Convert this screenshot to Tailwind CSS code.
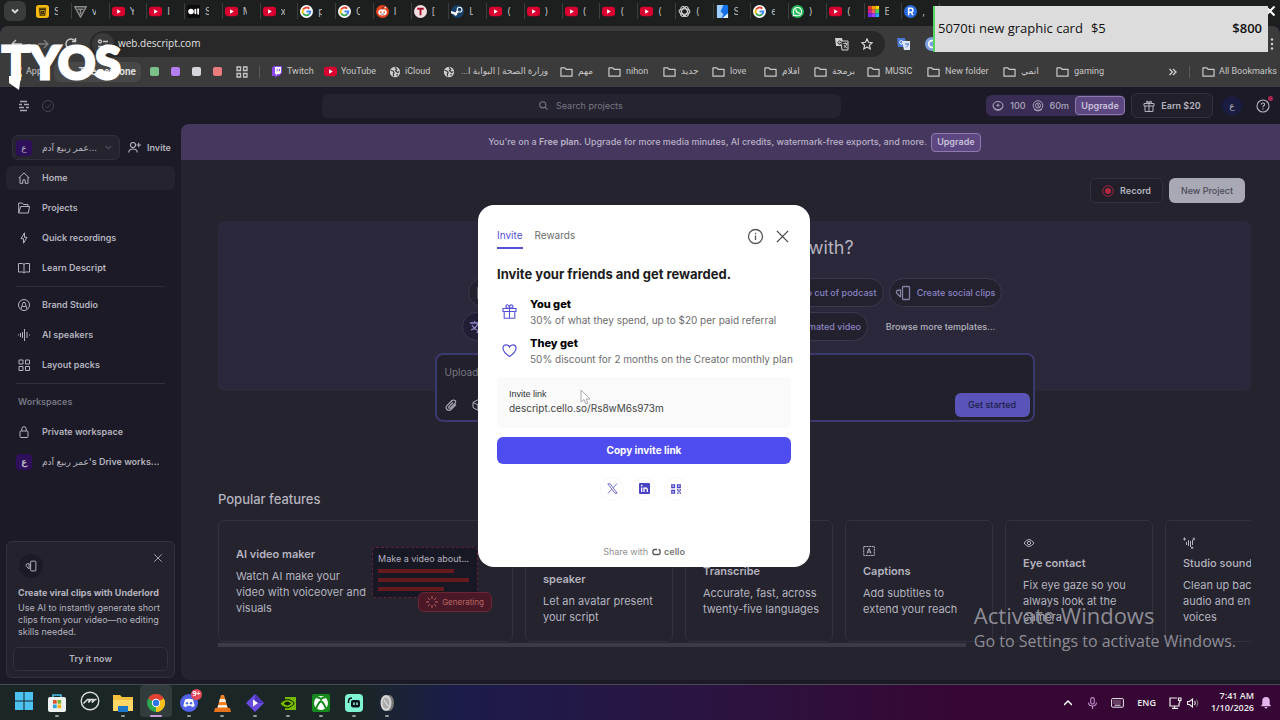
<!doctype html>
<html lang="en">
  <head>
    <meta charset="utf-8">
    <meta name="viewport" content="width=device-width, initial-scale=1">
    <title>Descript</title>
    <script src="https://cdn.jsdelivr.net/npm/@tailwindcss/browser@4"></script>
  </head>
  <body class="relative flex h-screen flex-col overflow-hidden bg-[#1b1a26] font-['Inter','DejaVu_Sans',sans-serif] text-[11px] text-[#b4b3bf]">
    <!-- Shared icons -->
    <svg class="hidden" xmlns="http://www.w3.org/2000/svg">
      <symbol id="yt" viewBox="0 0 14 14"><rect x="0" y="2" width="14" height="10" rx="3" fill="#d9002f"/><path d="M5.5 4.6v4.8L9.5 7z" fill="#fff"/></symbol>
      <symbol id="google" viewBox="0 0 14 14"><circle cx="7" cy="7" r="7" fill="#fff"/><g fill="none" stroke-width="2"><path d="M10 4A4.2 4.2 0 0 0 3.4 4.8" stroke="#ea4335"/><path d="M3.4 4.8a4.2 4.2 0 0 0 0 4.4" stroke="#fbbc05"/><path d="M3.4 9.2A4.2 4.2 0 0 0 9.8 10" stroke="#34a853"/><path d="M9.8 10a4.2 4.2 0 0 0 1.4-3H7" stroke="#4285f4"/></g></symbol>
      <symbol id="reddit" viewBox="0 0 14 14"><circle cx="7" cy="7" r="7" fill="#e64420"/><ellipse cx="7" cy="8" rx="4.6" ry="3.3" fill="#fff"/><circle cx="5.2" cy="7.5" r=".9" fill="#e64420"/><circle cx="8.8" cy="7.5" r=".9" fill="#e64420"/><path d="M5 9.4q2 1.3 4 0M7 4.8l.7-2.6 2 .5" stroke="#222" stroke-width=".7" fill="none"/><circle cx="10" cy="2.8" r="1" fill="#fff"/></symbol>
      <symbol id="bin" viewBox="0 0 14 14"><rect width="14" height="14" rx="3" fill="#f2b90f"/><path d="M3 3.5h8M4 5l.6 6h4.8L10 5zM6 7h2v2H6z" fill="none" stroke="#3a2d06" stroke-width="1.3"/></symbol>
      <symbol id="tri" viewBox="0 0 14 14"><path d="M1 2h12L7 13zM4 4.5h6M7 4.5V10" fill="none" stroke="#8a8a8a" stroke-width="1.6"/></symbol>
      <symbol id="medium" viewBox="0 0 14 14"><rect width="14" height="14" rx="2" fill="#0a0a0a"/><circle cx="4.3" cy="7" r="3" fill="#fff"/><rect x="8" y="4" width="2" height="6" rx="1" fill="#fff"/><rect x="11" y="3.5" width="2" height="7" rx="1" fill="#fff"/></symbol>
      <symbol id="tbadge" viewBox="0 0 14 14"><circle cx="7" cy="7" r="7" fill="#f3dfe2"/><path d="M3.5 4h7M7 4v7" stroke="#a3122c" stroke-width="2"/></symbol>
      <symbol id="steam" viewBox="0 0 14 14"><circle cx="7" cy="7" r="7" fill="#17416c"/><path d="M0 7.5l5 2L8.5 5" stroke="#fff" stroke-width="2.4" fill="none"/><circle cx="9.2" cy="5" r="2.6" fill="#17416c" stroke="#fff" stroke-width="1.1"/><circle cx="5" cy="10" r="1.6" fill="#fff"/></symbol>
      <symbol id="gpt" viewBox="0 0 14 14"><g fill="none" stroke="#ddd" stroke-width="1.1"><ellipse cx="7" cy="7" rx="5.8" ry="3"/><ellipse cx="7" cy="7" rx="5.8" ry="3" transform="rotate(60 7 7)"/><ellipse cx="7" cy="7" rx="5.8" ry="3" transform="rotate(120 7 7)"/></g></symbol>
      <symbol id="bluebook" viewBox="0 0 14 14"><rect x="1" width="12" height="14" rx="1" fill="#1672e8"/><path d="M1 0h7l-3 7 3 3-2 4H1z" fill="#9fd0ff"/><path d="M13 9v5H7z" fill="#e8f3ff"/></symbol>
      <symbol id="whatsapp" viewBox="0 0 14 14"><circle cx="7" cy="7" r="7" fill="#29b85a"/><path d="M2.4 11.7l.7-2.4A4.5 4.5 0 1 1 4.8 11z" fill="none" stroke="#fff" stroke-width="1.1"/><path d="M5.2 4.8q-.3 1.6 1.4 3t3 .9" stroke="#fff" stroke-width="1.4" fill="none"/></symbol>
      <symbol id="rainbow" viewBox="0 0 14 14"><path fill="#e53935" d="M1 1h4v4H1z"/><path fill="#ff9800" d="M5 1h4v4H5z"/><path fill="#ffd400" d="M9 1h4v4H9z"/><path fill="#d81b90" d="M1 5h4v4H1z"/><path fill="#ff5a60" d="M5 5h4v4H5z"/><path fill="#43d05c" d="M9 5h4v4H9z"/><path fill="#7a2cf0" d="M1 9h4v4H1z"/><path fill="#a23cff" d="M5 9h4v4H5z"/><path fill="#26a4ff" d="M9 9h4v4H9z"/></symbol>
      <symbol id="rbadge" viewBox="0 0 14 14"><circle cx="7" cy="7" r="7" fill="#2a6cdf"/><path d="M5 11V3.6h2.6a2 2 0 0 1 0 4.1H5M7.6 7.7L9.6 11" stroke="#fff" stroke-width="1.6" fill="none"/></symbol>
      <symbol id="folder" viewBox="0 0 14 14"><path d="M1 3h4.2l1.4 1.6H13V12H1z" fill="none" stroke="#c8c8c8" stroke-width="1.3" stroke-linejoin="round"/></symbol>
      <symbol id="globe" viewBox="0 0 14 14"><circle cx="7" cy="7" r="6" fill="#cfcfcf"/><path d="M2 5l3 1 1 2-1 1 .5 3M7 1.5L9 4 7.5 5.5 10 7.5l2-1M8.5 10l2 .5" stroke="#3c3c3c" stroke-width="1.4" fill="none"/></symbol>
      <symbol id="clips" viewBox="0 0 16 16"><g fill="none" stroke="currentColor" stroke-width="1.3" stroke-linejoin="round"><rect x="7.5" y="1.5" width="7" height="13" rx="1"/><path d="M5.5 12L2 8.5Q.8 7 2 5.5l3.5-.7V12"/></g></symbol>
      <symbol id="x" viewBox="0 0 12 12"><path d="M1.5 1.5l9 9M10.5 1.5l-9 9" stroke="currentColor" fill="none"/></symbol>
    </svg>

    <!-- Browser tab strip -->
    <div class="flex h-[26px] shrink-0 items-center bg-[#1d1f1e] pb-1 pl-1">
      <button aria-label="Search tabs" class="flex h-5 w-[22px] shrink-0 items-center justify-center rounded-md bg-[#3a3b3b]">
        <svg class="size-3" viewBox="0 0 12 12" fill="none" stroke="#ddd" stroke-width="1.8"><path d="M3 4.5l3 3 3-3"/></svg>
      </button>
      <div id="tabs" class="ml-2 flex w-[906px] shrink-0 items-center"></div>
      <div class="grow"></div>
      <button aria-label="Close window" class="mr-1 text-white"><svg class="size-3" stroke-width="2"><use href="#x"/></svg></button>
    </div>

    <!-- Address bar -->
    <div class="flex h-[34px] shrink-0 items-center rounded-t-lg bg-[#3b3b3b] pt-px text-[#c8c8c8]">
      <button aria-label="Back" class="ml-[10px]"><svg class="size-[14px]" viewBox="0 0 14 14" fill="none" stroke="currentColor" stroke-width="1.3"><path d="M12 7H2M6 3L2 7l4 4"/></svg></button>
      <button aria-label="Forward" class="ml-3 text-[#808080]"><svg class="size-[14px]" viewBox="0 0 14 14" fill="none" stroke="currentColor" stroke-width="1.3"><path d="M2 7h10M8 3l4 4-4 4"/></svg></button>
      <button aria-label="Reload" class="ml-[14px]"><svg class="size-[14px]" viewBox="0 0 14 14" fill="none" stroke="currentColor" stroke-width="1.5"><path d="M11.5 9A5 5 0 1 1 11 4M11.5 1v3.5H8"/></svg></button>
      <div class="ml-3 flex h-[26px] w-[795px] items-center rounded-full bg-[#282828] pl-[2px] pr-3">
        <span class="flex size-[22px] items-center justify-center rounded-full bg-[#3a3a3a]">
          <svg class="size-3" viewBox="0 0 12 12" fill="none" stroke="currentColor" stroke-width="1.3"><circle cx="3" cy="3.5" r="1.5"/><path d="M6 3.5h5M1 8.5h5"/><circle cx="9" cy="8.5" r="1.5"/></svg>
        </span>
        <input aria-label="Address" value="web.descript.com" class="ml-1 min-w-0 grow bg-transparent font-['Open_Sans',sans-serif] text-[10px] text-[#e2e2e2] outline-none">
        <svg class="size-[14px]" viewBox="0 0 14 14"><path d="M0 1h7l2 8H1z" fill="#cfcfcf"/><path d="M5.5 4H13v9H7z" fill="#333" stroke="#cfcfcf"/><path d="M6 4.8A1.6 1.6 0 1 0 6 6.5H4.6" stroke="#333" fill="none"/><path d="M8.5 6.5h4M10.5 5.5v1M12 6.5q-.5 2.5-3 4M9 8q1 2 3 3" stroke="#cfcfcf" fill="none" stroke-width=".9"/></svg>
        <svg class="ml-3 size-3" viewBox="0 0 12 12" fill="none" stroke="#d8d8d8" stroke-width="1.2"><path d="M6 .9l1.5 3.4 3.7.4-2.8 2.5.8 3.7L6 9l-3.2 1.9.8-3.7L.8 4.7l3.7-.4z"/></svg>
      </div>
      <svg class="ml-3 size-[14px]" viewBox="0 0 14 14"><path d="M0 1h8l2 9H1z" fill="#4a78d8"/><path d="M5 4h8v9H7z" fill="#dfe5f2"/><path d="M5.7 4.3a1.7 1.7 0 1 0 .2 1.9H4.6" stroke="#fff" fill="none"/><path d="M8 7h4M10 6v1M11.5 7q-.5 2-2.5 3.5" stroke="#4a78d8" fill="none"/></svg>
      <svg class="ml-[14px] size-[14px]" viewBox="0 0 14 14"><circle cx="7" cy="7" r="7" fill="#7f9fe0"/><path d="M10 5a3.5 3.5 0 1 0 0 4" stroke="#fff" stroke-width="1.5" fill="none"/></svg>
      <div class="grow"></div>
      <button aria-label="Menu" class="mr-[6px]"><svg class="h-3 w-1" viewBox="0 0 4 12" fill="#d0d0d0"><circle cx="2" cy="1.5" r="1.2"/><circle cx="2" cy="6" r="1.2"/><circle cx="2" cy="10.5" r="1.2"/></svg></button>
    </div>

    <!-- Bookmarks bar -->
    <div class="flex h-[27px] shrink-0 items-center overflow-hidden bg-[#3b3b3b] pb-1 font-['Roboto','DejaVu_Sans',sans-serif] text-[9px] whitespace-nowrap text-[#c8c8c8]">
      <a href="#" class="ml-3 flex w-[42px] items-center gap-1"><svg class="size-[10px]" viewBox="0 0 10 10"><path fill="#e8a33d" d="M0 0h3v3H0zM4 4h2v3H4zM7 7h3v3H7z"/><path fill="#d9534f" d="M0 4h3v3H0zM7 0h3v3H7z"/><path fill="#5a9" d="M4 0h2v3H4zM0 8h3v2H0z"/></svg>Apps</a>
      <a href="#" class="flex h-5 w-[87px] items-center justify-end rounded-md bg-[#484848] pr-[5px] text-[10px] font-bold text-[#dedede]">The new one</a>
      <a href="#" aria-label="Green group" class="ml-[9px] size-[9px] rounded-[2px] bg-[#7cc08a]"></a>
      <a href="#" aria-label="Purple group" class="ml-3 size-[9px] rounded-[2px] bg-[#b57ef0]"></a>
      <a href="#" aria-label="Grey group" class="ml-3 size-[9px] rounded-[2px] bg-[#d5d5da]"></a>
      <a href="#" aria-label="Red group" class="ml-3 size-[9px] rounded-[2px] bg-[#ea7b7b]"></a>
      <svg class="ml-[14px] size-3" viewBox="0 0 12 12" fill="none" stroke="#c8c8c8" stroke-width="1.3"><path d="M1 1h3.5v3.5H1zM7.5 1H11v3.5H7.5zM1 7.5h3.5V11H1zM7.5 7.5H11V11H7.5z"/></svg>
      <span class="ml-[11px] h-3 w-px bg-[#5a5a5a]"></span>
      <a href="#" class="ml-[11px] flex w-[53px] items-center gap-1"><svg class="size-3 shrink-0" viewBox="0 0 12 12"><path d="M1 2l2-2h8v7l-3 3H6l-2 2v-2H1z" fill="#8b46f0"/><path d="M4 1h6v5.5L8.5 8h-2L5 9.5V8H4z" fill="#fff"/><path d="M6.2 2.8v2.4M8.4 2.8v2.4" stroke="#8b46f0"/></svg>Twitch</a>
      <a href="#" class="flex w-[65px] items-center gap-1"><svg class="size-[13px] shrink-0"><use href="#yt"/></svg>YouTube</a>
      <a href="#" class="flex w-[54px] items-center gap-1"><svg class="size-3 shrink-0"><use href="#globe"/></svg>iCloud</a>
      <a href="#" class="flex w-[117px] items-center gap-[6px]"><svg class="size-3 shrink-0"><use href="#globe"/></svg><span dir="rtl">وزارة الصحة | البوابة ا...</span></a>
      <a href="#" class="flex w-[48px] items-center gap-[5px]"><svg class="size-[13px] shrink-0"><use href="#folder"/></svg>مهم</a>
      <a href="#" class="flex w-[55px] items-center gap-[5px]"><svg class="size-[13px] shrink-0"><use href="#folder"/></svg>nihon</a>
      <a href="#" class="flex w-[49px] items-center gap-[5px]"><svg class="size-[13px] shrink-0"><use href="#folder"/></svg>جديد</a>
      <a href="#" class="flex w-[52px] items-center gap-[5px]"><svg class="size-[13px] shrink-0"><use href="#folder"/></svg>love</a>
      <a href="#" class="flex w-[50px] items-center gap-[5px]"><svg class="size-[13px] shrink-0"><use href="#folder"/></svg>افلام</a>
      <a href="#" class="flex w-[53px] items-center gap-[5px]"><svg class="size-[13px] shrink-0"><use href="#folder"/></svg>برمجة</a>
      <a href="#" class="flex w-[60px] items-center gap-[5px]"><svg class="size-[13px] shrink-0"><use href="#folder"/></svg>MUSIC</a>
      <a href="#" class="flex w-[76px] items-center gap-[5px]"><svg class="size-[13px] shrink-0"><use href="#folder"/></svg>New folder</a>
      <a href="#" class="flex w-[53px] items-center gap-[5px]"><svg class="size-[13px] shrink-0"><use href="#folder"/></svg>انمي</a>
      <a href="#" class="flex items-center gap-[5px]"><svg class="size-[13px] shrink-0"><use href="#folder"/></svg>gaming</a>
      <div class="grow"></div>
      <button aria-label="More bookmarks"><svg class="size-2" viewBox="0 0 8 8" fill="none" stroke="#d0d0d0" stroke-width="1.3"><path d="M.5 1l3 3-3 3M4 1l3 3-3 3"/></svg></button>
      <span class="ml-3 h-3 w-px bg-[#5a5a5a]"></span>
      <a href="#" class="ml-3 mr-[3px] flex items-center gap-1"><svg class="size-[13px] shrink-0"><use href="#folder"/></svg>All Bookmarks</a>
    </div>

    <!-- Descript app -->
    <div class="relative flex min-h-0 grow flex-col pb-1">
      <header class="flex h-[37px] shrink-0 items-center">
        <svg class="ml-[18px] size-3" viewBox="0 0 12 12" stroke="#a9a8b4" stroke-width="1.6" fill="none"><path d="M2 1.5h7M1 4.5h3M6 4.5h5M1 7.5h5M8 7.5h3M2 10.5h7"/></svg>
        <svg class="ml-3 size-3" viewBox="0 0 12 12" stroke="#474652" fill="none"><circle cx="6" cy="6" r="5.5"/><path d="M3.5 6.2l1.8 1.7 3.2-3.6"/></svg>
        <label class="ml-[268px] flex h-6 w-[519px] items-center justify-center gap-2 rounded-md bg-[#24232f] text-[#777683]">
          <svg class="size-[9px]" viewBox="0 0 10 10" fill="none" stroke="currentColor" stroke-width="1.2"><circle cx="4.2" cy="4.2" r="3.4"/><path d="M6.8 6.8l2.7 2.7"/></svg>
          <input aria-label="Search projects" placeholder="Search projects" class="w-[68px] bg-transparent text-[9px] outline-none placeholder:text-[#777683]">
        </label>
        <div class="flex grow items-center justify-end pr-[10px] text-[9px]">
          <div class="flex h-[21px] items-center gap-[6px] rounded-md bg-[#3a2d55] pl-[6px] font-medium text-[#aaa6bb]">
            <svg class="size-3" viewBox="0 0 12 12" fill="none" stroke="currentColor"><ellipse cx="6" cy="5.5" rx="5" ry="4"/><path d="M1 6.5q1 4 5 4t5-4M6 3.8v3M4.5 5.3h3"/></svg>100
            <svg class="size-3" viewBox="0 0 12 12" fill="none" stroke="currentColor"><circle cx="6" cy="5.5" r="4.8"/><circle cx="6" cy="5.5" r="2.5"/><path d="M6 4v2l1.5.5M2 9.5q4 3 8 0"/></svg>60m
            <button class="h-[19px] w-[50px] rounded-sm border border-[#8d79ad] bg-[#5c4780] font-semibold text-[#c9c0da]">Upgrade</button>
          </div>
          <button class="ml-[6px] flex h-[25px] w-[82px] items-center justify-center gap-[6px] rounded-md border border-[#32313d] bg-[#201f2a] font-semibold">
            <svg class="size-3" viewBox="0 0 12 12" fill="none" stroke="currentColor"><path d="M1 3.5h10v2.5H1zM2 6v5.5h8V6M6 3.5v8M6 3.5Q3 3.5 3.5 1.5 5.5 0 6 3.5q.5-3.5 2.5-2Q9 3.5 6 3.5"/></svg>Earn $20</button>
          <span class="ml-[9px] flex size-5 items-center justify-center rounded-full bg-[#1b1c42]">ع</span>
          <button aria-label="Help" class="relative ml-[14px] flex size-[14px] items-center justify-center">
            <svg class="size-[14px]" viewBox="0 0 14 14" fill="none" stroke="#b4b3bf" stroke-width="1.1"><circle cx="7" cy="7" r="6"/><path d="M5.3 5.6Q5.3 4 7 4t1.7 1.5Q8.7 6.5 7 7.2v1M7 9.3v1.1"/></svg>
            <span class="absolute -top-[3px] -right-[3px] size-[5px] rounded-full bg-[#a8264f]"></span>
          </button>
        </div>
      </header>

      <div class="flex min-h-0 grow">
        <!-- Sidebar -->
        <aside class="flex w-[181px] shrink-0 flex-col px-[6px] pt-[11px] text-[9px] font-semibold">
          <div class="flex h-[25px] items-center gap-2 pl-[6px]">
            <button class="flex h-[25px] w-[108px] shrink-0 items-center rounded-md border border-[#302f3b] bg-[#24232e] pl-[3px] pr-[7px] font-medium">
              <span class="flex size-4 items-center justify-center rounded-sm bg-[#2d0f5a]">ع</span>
              <span class="ml-[10px] grow text-left whitespace-nowrap">عمر ربيع آدم...</span>
              <svg class="ml-1 size-[7px]" viewBox="0 0 8 8" fill="none" stroke="#777683"><path d="M1 2.5l3 3 3-3"/></svg>
            </button>
            <button class="flex items-center gap-[6px]"><svg class="size-[13px]" viewBox="0 0 13 13" fill="none" stroke="currentColor" stroke-width="1.1"><circle cx="5" cy="4" r="2.5"/><path d="M.7 11.5Q1 8 5 8t4.3 3.5M8.5 4h4.5M10.7 1.7v4.6"/></svg>Invite</button>
          </div>
          <nav class="mt-[6px] flex flex-col gap-[6px]">
            <a href="#" class="flex h-6 items-center gap-3 rounded-md bg-[#24232e] pl-3"><svg class="size-3" viewBox="0 0 12 12" fill="none" stroke="currentColor"><path d="M.7 6L6 .9 11.3 6M2 5v6.3h2.8V8q1.2-1 2.4 0v3.3H10V5"/></svg>Home</a>
            <a href="#" class="flex h-6 items-center gap-3 pl-3"><svg class="size-3" viewBox="0 0 12 12" fill="none" stroke="currentColor"><path d="M.7 11V1h3.6l1.2 1.5H10V4.5M.7 11l2-6.5h8.8L10.3 11z"/></svg>Projects</a>
            <a href="#" class="flex h-6 items-center gap-3 pl-3"><svg class="size-3" viewBox="0 0 12 12" fill="none" stroke="currentColor" stroke-linejoin="round"><path d="M6.5.8L3 6.7h2.5v4.5L9 5.3H6.5z"/></svg>Quick recordings</a>
            <a href="#" class="flex h-6 items-center gap-3 pl-3"><svg class="size-3" viewBox="0 0 12 12" fill="none" stroke="currentColor"><path d="M.5 1.5h4Q6 1.5 6 3q0-1.5 1.5-1.5h4v8.5h-4L6 11l-1.5-1h-4zM6 3v8"/></svg>Learn Descript</a>
            <hr class="mx-[10px] border-[#2d2c38]">
            <a href="#" class="flex h-6 items-center gap-3 pl-3"><svg class="size-3" viewBox="0 0 12 12" fill="none" stroke="currentColor"><circle cx="6" cy="6" r="5.5"/><path d="M3 10l2-6.5h2L9 10M4.2 7.5h3.6"/></svg>Brand Studio</a>
            <a href="#" class="flex h-6 items-center gap-3 pl-3"><svg class="size-3" viewBox="0 0 12 12" fill="none" stroke="currentColor"><path d="M.5 5.5v1M2.5 4v4M4.5 3v6M6.5 0v12M9 3v6M11.5 5.5v1"/></svg>AI speakers</a>
            <a href="#" class="flex h-6 items-center gap-3 pl-3"><svg class="size-3" viewBox="0 0 12 12" fill="none" stroke="currentColor"><path d="M1 1h4v4H1zM7.5 1h4v4h-4zM1 7.5h4v4H1zM7.5 7.5h4v4h-4z"/></svg>Layout packs</a>
            <hr class="mx-[10px] border-[#32313d]">
            <h2 class="flex h-6 items-center pl-3 text-[#777683]">Workspaces</h2>
            <a href="#" class="flex h-6 items-center gap-3 pl-3"><svg class="size-3" viewBox="0 0 12 12" fill="none" stroke="currentColor"><rect x="2" y="5" width="8" height="6.5" rx="1"/><path d="M3.8 5V3Q4 .7 6 .7T8.2 3v2"/></svg>Private workspace</a>
            <a href="#" class="flex h-6 items-center gap-[10px] pl-[10px] whitespace-nowrap"><span class="flex size-4 shrink-0 items-center justify-center rounded-sm bg-[#2d0f5a]">ع</span><span><bdi class="font-medium">عمر ربيع آدم</bdi>'s Drive works...</span></a>
          </nav>

          <section class="mt-auto mb-[2px] rounded-md border border-[#32313d] bg-[#23222d] p-[6px]">
            <div class="flex items-start justify-between pt-[5px] pl-[6px] pr-[5px]">
              <span class="mt-px flex size-6 items-center justify-center rounded-full bg-[#1b1a26]"><svg class="size-3"><use href="#clips"/></svg></span>
              <button aria-label="Dismiss"><svg class="size-[10px]"><use href="#x"/></svg></button>
            </div>
            <h3 class="mt-2 pl-[5px] leading-[14px] font-bold whitespace-nowrap">Create viral clips with Underlord</h3>
            <p class="mt-[2px] pl-[5px] leading-[12px] font-normal whitespace-nowrap">Use AI to instantly generate short<br>clips from your video—no editing<br>skills needed.</p>
            <button class="mt-[9px] h-6 w-full rounded-md border border-[#32313d] bg-[#201f2a]">Try it now</button>
          </section>
        </aside>

        <!-- Main panel -->
        <main class="flex min-w-0 grow flex-col overflow-hidden rounded-l-lg bg-[#24232e]">
          <div class="flex h-9 shrink-0 items-center justify-center gap-1 bg-[#46375f] pl-2 text-[9px] font-medium text-[#b9b2c7]">
            <p>You're on a <b class="font-semibold">Free plan.</b> Upgrade for more media minutes, AI credits, watermark-free exports, and more.</p>
            <button class="h-[19px] w-[50px] rounded-sm border border-[#8d79ad] bg-[#5c4780] font-semibold text-[#c9c0da]">Upgrade</button>
          </div>
          <div class="mt-[18px] flex shrink-0 justify-end gap-[6px] pr-[35px] text-[9px]">
            <button class="flex h-[25px] w-[73px] items-center justify-center gap-[6px] rounded-md border border-[#32313d] bg-[#201f2a] font-semibold"><svg class="size-3" viewBox="0 0 12 12"><circle cx="6" cy="6" r="5.3" fill="none" stroke="#a3273f"/><circle cx="6" cy="6" r="3" fill="#b3273f"/></svg>Record</button>
            <button class="h-[25px] w-[76px] rounded-md bg-[#a9a8b5] font-medium text-[#4b4a57]">New Project</button>
          </div>

          <section class="mt-[18px] mr-[29px] ml-[37px] flex h-[170px] shrink-0 flex-col items-center rounded-md bg-[#2a283a] pt-[14px]">
            <h1 class="text-[18px] leading-[26px] font-normal">What can we help you with?</h1>
            <div class="mt-[17px] flex w-[534px] justify-between text-[9px] font-medium text-[#8b84c4]">
              <button class="flex h-[29px] items-center gap-[7px] rounded-full border border-[#3b3950] bg-[#22212d] px-[6px]"><svg class="size-4" viewBox="0 0 16 16" fill="none" stroke="#9f9eac"><path d="M3 2h10v12H3zM5 5h6M5 8h6M5 11h4"/></svg>Edit a script</button>
              <div class="flex gap-[5px]">
                <button class="flex h-[29px] items-center rounded-full border border-[#3b3950] bg-[#22212d] px-[6px]">Video cut of podcast</button>
                <button class="flex h-[29px] w-[113px] items-center justify-center gap-[6px] rounded-full border border-[#3b3950] bg-[#22212d]"><svg class="size-4 text-[#8581a5]"><use href="#clips"/></svg>Create social clips</button>
              </div>
            </div>
            <div class="mt-[5px] flex w-[545px] justify-between text-[9px] font-medium text-[#8b84c4]">
              <button class="flex h-[29px] items-center gap-[7px] rounded-full border border-[#3b3950] bg-[#201d35] px-[6px]"><svg class="size-4" viewBox="0 0 16 16" fill="none" stroke="currentColor" stroke-width="1.3"><path d="M1 4h9M5.5 2v2M9 4q-1.5 5-7 7M3 6q2 4 5 5M8 14l3.5-8 3.5 8M9.5 11.5h4"/></svg>Translate</button>
              <div class="flex gap-[6px]">
                <button class="flex h-[29px] items-center rounded-full border border-[#3b3950] bg-[#22212d] px-[6px]">Make an animated video</button>
                <button class="w-[133px] text-[#b4b3bf]">Browse more templates...</button>
              </div>
            </div>
            <div class="mt-3 flex h-[69px] w-[600px] shrink-0 flex-col justify-between rounded-lg border-2 border-[#3c3870] bg-[#22212b] py-[3px] pr-[3px] pl-2">
              <input aria-label="Prompt" placeholder="Upload a file or describe your video" class="mt-[6px] bg-transparent text-[10px] leading-4 outline-none placeholder:text-[#777683]">
              <div class="flex items-center">
                <svg class="size-3" viewBox="0 0 12 12" fill="none" stroke="currentColor" stroke-width="1.1"><path d="M11 5.5L6 10.5q-2 1.5-4 0t0-4L7 1.5q1.5-1 3 0t0 3L5.5 9Q4.5 9.5 4 9t0-1.5L8 3.5"/></svg>
                <svg class="ml-[15px] size-3" viewBox="0 0 12 12" fill="none" stroke="currentColor"><path d="M6 .7l5 2.7v5.2L6 11.3 1 8.6V3.4zM1 3.4l5 2.6 5-2.6M6 6v5.3"/></svg>
                <button class="ml-auto h-6 w-[75px] rounded-md bg-[#5a54b8] text-[9px] font-medium text-[#201d4a]">Get started</button>
              </div>
            </div>
          </section>

          <h2 class="mt-[98px] ml-[37px] shrink-0 text-[13px] leading-5 font-medium">Popular features</h2>
          <div class="mt-[11px] mr-[29px] ml-[37px] flex h-[122px] shrink-0 gap-3 overflow-hidden text-[11px] leading-4">
            <article class="relative flex w-[295px] shrink-0 items-center rounded-md border border-[#32313d] pl-[17px]">
              <div class="w-[136px] shrink-0">
                <h3 class="font-semibold">AI video maker</h3>
                <p class="mt-[6px] w-[134px]">Watch AI make your<br>video with voiceover and<br>visuals</p>
              </div>
              <div class="relative mt-[26px] h-[51px] w-[106px] self-start rounded-sm border border-dashed border-[#5e2334] bg-[#181724] p-[5px]">
                <p class="text-[9px] leading-3 whitespace-nowrap">Make a video about...</p>
                <div class="mt-1 h-1 w-[76px] bg-[#651a1d]"></div>
                <div class="mt-[5px] h-1 w-[91px] bg-[#651a1d]"></div>
                <div class="mt-[5px] h-1 w-[66px] bg-[#651a1d]"></div>
                <span class="absolute top-[44px] left-[45px] flex h-5 w-[74px] items-center justify-center gap-1 rounded-md border border-[#692735] bg-[#4a1826] text-[8px] text-[#b86763]"><svg class="size-3" viewBox="0 0 12 12" stroke="currentColor"><path d="M6 0v3M6 9v3M0 6h3M9 6h3M1.8 1.8l2 2M8.2 8.2l2 2M10.2 1.8l-2 2M3.8 8.2l-2 2"/></svg>Generating</span>
              </div>
            </article>
            <article class="flex w-[148px] shrink-0 flex-col justify-center rounded-md border border-[#32313d] px-[17px]">
              <svg class="mb-[6px] size-3" viewBox="0 0 12 12" fill="none" stroke="currentColor"><circle cx="6" cy="4" r="2.5"/><path d="M1 11q1-4 5-4t5 4"/></svg>
              <h3 class="font-semibold">Generate an AI<br>speaker</h3>
              <p class="mt-[6px]">Let an avatar present your script</p>
            </article>
            <article class="flex w-[148px] shrink-0 flex-col justify-center rounded-md border border-[#32313d] pl-[17px]">
              <svg class="mb-[6px] size-3" viewBox="0 0 12 12" fill="none" stroke="currentColor"><path d="M1 2h10M1 5h7M1 8h10"/></svg>
              <h3 class="font-semibold">Transcribe</h3>
              <p class="mt-[6px]">Accurate, fast, across twenty-five languages</p>
            </article>
            <article class="flex w-[148px] shrink-0 flex-col justify-center rounded-md border border-[#32313d] px-[17px]">
              <svg class="mb-[6px] size-3" viewBox="0 0 12 12" fill="none" stroke="currentColor"><rect x=".7" y="1.5" width="10.6" height="9" stroke-dasharray="2 .6"/><path d="M4 8.5L6 3.5l2 5M4.7 7h2.6"/></svg>
              <h3 class="font-semibold">Captions</h3>
              <p class="mt-[6px]">Add subtitles to extend your reach</p>
            </article>
            <article class="flex w-[148px] shrink-0 flex-col justify-center rounded-md border border-[#32313d] px-[17px]">
              <svg class="mb-[6px] size-3" viewBox="0 0 12 12" fill="none" stroke="currentColor"><path d="M1 6q5-7 10 0-5 7-10 0z"/><circle cx="6" cy="6" r="1.7"/></svg>
              <h3 class="font-semibold">Eye contact</h3>
              <p class="mt-[6px]">Fix eye gaze so you always look at the camera</p>
            </article>
            <article class="flex w-[148px] shrink-0 flex-col justify-center rounded-md border border-[#32313d] pl-[17px]">
              <svg class="mb-[6px] size-3" viewBox="0 0 12 12" fill="none" stroke="currentColor"><path d="M0 2h3M1.5.5v3M3.5 5v3M5.5 3v6M7.5 4v6M9.5 3v5M11 .5v3M9.5 2h3M9 9.5v2.5M8 10.8h2.5"/></svg>
              <h3 class="font-medium whitespace-nowrap">Studio sound</h3>
              <p class="mt-[6px] whitespace-nowrap">Clean up background<br>audio and enhance<br>voices</p>
            </article>
          </div>
          <div class="mt-px mr-[29px] ml-[37px] shrink-0"><div class="h-[4px] w-[748px] bg-[#3b3a47]"></div></div>
        </main>
      </div>

      <!-- Invite dialog -->
      <div class="absolute inset-0 flex items-center justify-center pl-2">
        <div role="dialog" aria-label="Invite your friends" class="flex h-[362px] w-[332px] flex-col rounded-2xl bg-white px-[19px] pt-[22px] text-[10px] text-[#2a2a2a]">
          <div class="flex items-start text-[#6b6b6b]">
            <button class="h-[22px] border-b-2 border-[#5450d8] pb-[2px] text-[#5450d8]">Invite</button>
            <button class="ml-3 h-[22px] pb-1">Rewards</button>
            <button aria-label="Info" class="mt-px ml-auto"><svg class="size-[17px]" viewBox="0 0 17 17" fill="none" stroke="#555" stroke-width="1.3"><circle cx="8.5" cy="8.5" r="7"/><path d="M8.5 7.5v4.5M8.5 4.8v1.4"/></svg></button>
            <button aria-label="Close" class="mt-[2px] mr-px ml-[11px] text-[#444]"><svg class="size-[15px]"><use href="#x"/></svg></button>
          </div>
          <h2 class="mt-4 text-[13px] leading-[18px] font-bold text-[#1c1c1c]">Invite your friends and get rewarded.</h2>
          <div class="mt-[13px] flex items-center gap-[13px] pl-[5px]">
            <svg class="size-[15px] shrink-0" viewBox="0 0 15 15" fill="none" stroke="#5450d8" stroke-width="1.1"><path d="M1 4.5h13v3H1zM2.2 7.5v6.7h10.6V7.5M7.5 4.5v9.7M7.5 4.5Q4 4.5 4 2.5T5.5.8Q7.5 1 7.5 4.5 7.5 1 9.5.8 11 1 11 2.5T7.5 4.5"/></svg>
            <div><h3 class="text-[11px] leading-4 font-extrabold text-black">You get</h3><p class="leading-4 whitespace-nowrap text-[#6d6d6d]">30% of what they spend, up to $20 per paid referral</p></div>
          </div>
          <div class="mt-[7px] flex items-center gap-[13px] pl-[5px]">
            <svg class="size-[15px] shrink-0" viewBox="0 0 15 15" fill="none" stroke="#5450d8" stroke-width="1.2"><path d="M7.5 13.5Q1 9 1 5.2 1 1.8 4.2 1.8 6.5 1.8 7.5 4 8.5 1.8 10.8 1.8 14 1.8 14 5.2 14 9 7.5 13.5z"/></svg>
            <div><h3 class="text-[11px] leading-4 font-extrabold text-black">They get</h3><p class="leading-4 whitespace-nowrap text-[#6d6d6d]">50% discount for 2 months on the Creator monthly plan</p></div>
          </div>
          <label class="mt-[10px] flex h-[51px] flex-col rounded-md bg-[#fafafa] px-3 pt-[10px] font-['Liberation_Sans',sans-serif] text-[9px] leading-[14px] text-[#333]">
            Invite link
            <input readonly value="descript.cello.so/Rs8wM6s973m" class="w-full bg-transparent font-['Inter',sans-serif] text-[10px] leading-[14px] text-[#444] outline-none">
          </label>
          <button class="mt-[9px] h-[27px] shrink-0 rounded-md bg-[#504df0] font-bold text-white">Copy invite link</button>
          <div class="mt-[13px] flex justify-center gap-2">
            <a href="#" aria-label="Share on X" class="flex size-6 items-center justify-center rounded-full border border-[#f8f8fb]"><svg class="size-[11px]" viewBox="0 0 11 11" fill="none" stroke="#6360c8"><path d="M.8.8h2.4l7 9.4H7.8zM10 .6L6.2 4.8M1 10.4l3.9-4.3" stroke-width=".9"/></svg></a>
            <a href="#" aria-label="Share on LinkedIn" class="flex size-6 items-center justify-center rounded-full border border-[#f8f8fb]"><svg class="size-[11px]" viewBox="0 0 11 11"><rect width="11" height="11" rx="1" fill="#4a43c4"/><path d="M2.7 4.5v4.5M5 9V4.5M5 6.5q0-1.5 1.5-1.5T8.3 6.5V9" stroke="#fff" stroke-width="1.3" fill="none"/><circle cx="2.7" cy="2.6" r=".9" fill="#fff"/></svg></a>
            <a href="#" aria-label="QR code" class="flex size-6 items-center justify-center rounded-full border border-[#f8f8fb]"><svg class="size-[10px]" viewBox="0 0 10 10" fill="none" stroke="#4a43c4" stroke-width="1.3"><path d="M.8.8h2.7v2.7H.8zM6.5.8h2.7v2.7H6.5zM.8 6.5h2.7v2.7H.8z"/><path d="M6 6h1.5M8.5 6H10M7.2 7.5h1.5M6 9.2h1.5M8.7 9h1.3"/></svg></a>
          </div>
          <p class="mt-auto flex items-center justify-center gap-1 pb-[9px] text-[9px] leading-3 text-[#909090]">Share with
            <svg class="h-2 w-[9px]" viewBox="0 0 9 8" fill="none" stroke="#555" stroke-width="1.3"><path d="M5 1.5H2.5Q.8 1.5.8 4t1.7 2.5H4M4 6.5h2.5Q8.2 6.5 8.2 4T6.5 1.5"/></svg>
            <span class="-ml-px font-semibold text-[#777]">cello</span></p>
        </div>
      </div>
    </div>

    <!-- Taskbar -->
    <footer class="flex h-9 shrink-0 items-center border-t border-[#4a4a56] bg-linear-to-r from-[#1b2626] from-28% via-[#1b1b4c] via-36% to-[#360634] to-75% pl-2 font-['Open_Sans',sans-serif] text-[9px] text-[#eee]">
      <div class="flex grow items-center gap-px pb-1">
        <button aria-label="Start" class="flex size-8 items-center justify-center"><svg class="size-[18px]" viewBox="0 0 18 18" fill="#4cc2f1"><path d="M0 0h8.5v8.5H0zM9.5 0H18v8.5H9.5zM0 9.5h8.5V18H0zM9.5 9.5H18V18H9.5z"/></svg></button>
        <button aria-label="Store" class="flex size-8 flex-col items-center justify-end gap-[3px]"><svg class="size-[18px]" viewBox="0 0 18 18"><path d="M5 4V1h8v3" fill="none" stroke="#4cc2f1" stroke-width="1.5"/><rect y="3" width="18" height="15" rx="2" fill="#eef1f4"/><path fill="#e2522d" d="M5 6h3.7v3.7H5z"/><path fill="#7cb32b" d="M9.5 6h3.7v3.7H9.5z"/><path fill="#2ba5de" d="M5 10.5h3.7v3.7H5z"/><path fill="#f5b514" d="M9.5 10.5h3.7v3.7H9.5z"/></svg><span class="h-[2px] w-1 rounded-full bg-[#999]"></span></button>
        <button aria-label="Launcher" class="flex size-8 items-center justify-center"><svg class="size-5" viewBox="0 0 20 20" fill="none" stroke="#ddd"><circle cx="10" cy="10" r="8.8" stroke-width="1.4"/><path d="M3.5 12.5l4-4h2l-1 3 2.5-3h2l-1 3 3-3h1.5" stroke-width="1.5"/></svg></button>
        <button aria-label="File Explorer" class="flex size-8 flex-col items-center justify-end gap-[3px]"><svg class="h-[18px] w-5" viewBox="0 0 20 18"><path d="M0 1h7l2 2h11v14H0z" fill="#f5c03c"/><path d="M0 6h20v11H0z" fill="#ffd766"/><path d="M5 12h10v6H5z" fill="#1d77c9"/></svg><span class="h-[2px] w-1 rounded-full bg-[#999]"></span></button>
        <button aria-label="Chrome" class="flex size-8 flex-col items-center justify-end gap-[3px] rounded bg-white/10"><svg class="size-[18px]" viewBox="0 0 18 18"><circle cx="9" cy="9" r="9" fill="#2da44e"/><path d="M9 9L1.2 4.5A9 9 0 0 1 16.8 4.5z" fill="#e34133"/><path d="M9 9l7.8-4.5A9 9 0 0 1 9 18z" fill="#fbc116"/><circle cx="9" cy="9" r="4.2" fill="#fff"/><circle cx="9" cy="9" r="3.2" fill="#2f74e0"/></svg><span class="h-[2px] w-3 rounded-full bg-[#c79bd6]"></span></button>
        <button aria-label="Discord" class="relative flex size-8 flex-col items-center justify-end gap-[3px]"><svg class="size-[18px]" viewBox="0 0 18 18"><circle cx="9" cy="9" r="9" fill="#5262e8"/><path d="M5 5.5q4-1.5 8 0l1.7 6.5-2.7 1.2-1-1.5H7l-1 1.5L3.3 12z" fill="#fff"/><circle cx="7" cy="9.3" r="1.2" fill="#5262e8"/><circle cx="11" cy="9.3" r="1.2" fill="#5262e8"/></svg><span class="h-[2px] w-1 rounded-full bg-[#999]"></span><span class="absolute top-[4px] right-[3px] flex size-[11px] items-center justify-center rounded-full bg-[#e04a5b] text-[7px] font-bold text-white">9+</span></button>
        <button aria-label="VLC" class="flex size-8 flex-col items-center justify-end gap-[3px]"><svg class="size-[17px]" viewBox="0 0 17 17"><path d="M7 0h3l4 14H3z" fill="#f58220"/><path d="M5.9 4h5.2l.9 3H5zM4.2 10h8.6l.7 2.5h-10z" fill="#f3ede6"/><path d="M1 13h15l1 4H0z" fill="#e8731a"/></svg><span class="h-[2px] w-1 rounded-full bg-[#999]"></span></button>
        <button aria-label="Clipchamp" class="flex size-8 flex-col items-center justify-end gap-[3px]"><svg class="size-[18px]" viewBox="0 0 18 18"><path d="M9 0l9 9-9 9-9-9z" fill="#6a4be0"/><path d="M9 0l9 9H9z" fill="#4c35b8"/><path d="M7 5.5v7l5-3.5z" fill="#fff"/></svg><span class="h-[2px] w-1 rounded-full bg-[#999]"></span></button>
        <button aria-label="NVIDIA" class="flex size-8 flex-col items-center justify-end gap-[5px]"><svg class="h-[13px] w-4" viewBox="0 0 16 13"><path d="M5 0h11v13H5z" fill="#76b900"/><path d="M0 6.5Q5 1 10 3t4 4q-5 5-9 3.5T0 6.5z" fill="#76b900" stroke="#10220a"/><path d="M4 6.5q3-4 7 0-4 4-7 0" fill="#10220a"/></svg><span class="h-[2px] w-1 rounded-full bg-[#999]"></span></button>
        <button aria-label="Xbox" class="flex size-8 flex-col items-center justify-end gap-[3px]"><svg class="size-[18px]" viewBox="0 0 18 18"><rect width="18" height="18" rx="2" fill="#138a1b"/><circle cx="9" cy="9" r="7" fill="#fff"/><path d="M4 15Q6 9 9 7q3 2 5 8M4.5 3.5Q7 3 9 5q2-2 4.5-1.5" stroke="#138a1b" stroke-width="2" fill="none"/></svg><span class="h-[2px] w-1 rounded-full bg-[#999]"></span></button>
        <button aria-label="Streamlabs" class="flex size-8 flex-col items-center justify-end gap-[3px]"><svg class="size-[18px]" viewBox="0 0 18 18"><rect width="18" height="18" rx="4" fill="#80f5d2"/><path d="M3.5 9V7.5Q3.5 4 7 4" stroke="#09161d" stroke-width="1.5" fill="none"/><rect x="6" y="6" width="9" height="7.5" rx="2" fill="#09161d"/><path d="M9 8.5v2.5M12 8.5v2.5" stroke="#80f5d2" stroke-width="1.5"/></svg><span class="h-[2px] w-1 rounded-full bg-[#999]"></span></button>
        <button aria-label="Mixer" class="flex size-8 flex-col items-center justify-end gap-[3px]"><svg class="size-[18px]" viewBox="0 0 18 18"><ellipse cx="11" cy="9" rx="5" ry="8" fill="#777"/><ellipse cx="8" cy="9" rx="5.5" ry="8" fill="#d4d4d4"/><ellipse cx="8" cy="9" rx="3.5" ry="5.5" fill="#aaa"/><path d="M6 6l4 6" stroke="#eee"/></svg><span class="h-[2px] w-1 rounded-full bg-[#999]"></span></button>
      </div>
      <svg class="size-2" viewBox="0 0 8 8" fill="none" stroke="#fff" stroke-width="1.5"><path d="M0 6l4-4 4 4"/></svg>
      <svg class="ml-4 h-3 w-[9px]" viewBox="0 0 9 12" fill="none" stroke="#c58fd0" stroke-width="1.1"><rect x="2.7" y=".6" width="3.6" height="6.5" rx="1.8"/><path d="M.6 5.5Q.6 9 4.5 9t3.9-3.5M4.5 9v3"/></svg>
      <svg class="ml-[14px] h-[10px] w-[13px]" viewBox="0 0 13 10" fill="none" stroke="#eee"><rect x=".6" y=".6" width="11.8" height="8.6" rx="1"/><path d="M2.5 3h8M2.5 5h8" stroke-dasharray="1 1"/><path d="M3.5 7.2h6"/></svg>
      <span class="ml-[13px] font-semibold">ENG</span>
      <svg class="ml-[13px] h-3 w-[13px]" viewBox="0 0 13 12" fill="none" stroke="#eee" stroke-width="1.2"><path d="M8 1H1v8h9V6M3 11.3h6M5.5 9v2M9.5 1h2.5v2.5H9.5zM10.7 3.5V6"/></svg>
      <svg class="ml-[5px] h-[10px] w-3" viewBox="0 0 12 10" fill="none" stroke="#eee" stroke-width="1.1"><path d="M.6 3.5h2L5.5 1v8L2.6 6.5h-2zM7.5 3q1.5 2 0 4"/><path d="M9.5 1.5q2.5 3.5 0 7" stroke="#777"/></svg>
      <div class="ml-3 pb-[2px] text-right leading-3 font-semibold"><div>7:41 AM</div><div>1/10/2026</div></div>
      <svg class="mr-[9px] ml-[7px] h-3 w-[10px]" viewBox="0 0 10 12" fill="#e3b5ee"><path d="M5 0q3.7 0 3.7 4v3L10 9.3H0L1.3 7V4Q1.3 0 5 0zM3.5 10h3q-.3 1.5-1.5 1.5T3.5 10z"/></svg>
    </footer>

    <!-- Stream logo -->
    <div class="absolute top-[39px] left-[2px] font-['Lato',sans-serif] text-[46px] leading-[46px] font-black text-white [-webkit-text-stroke:3px_#fff]">TYOS
      <svg class="absolute top-[37px] left-[7px] h-[14px] w-3" viewBox="0 0 12 14" fill="#fff"><path d="M0 0h12L10 14 0 7z"/></svg>
    </div>

    <!-- Donation goal -->
    <div class="absolute top-[6px] right-3 flex h-[46px] w-[335px] items-center gap-2 border-l-2 border-[#56d65c] bg-[#dcdcdc] pr-[6px] pl-[3px] font-['Open_Sans',sans-serif] text-[13px] text-[#111]">
      <span class="font-medium">5070ti new graphic card</span><span>$5</span><span class="ml-auto font-semibold">$800</span>
    </div>

    <!-- Activation watermark -->
    <div class="pointer-events-none absolute right-[44px] bottom-[67px] font-['Open_Sans',sans-serif] whitespace-nowrap text-[#8e8d96]">
      <p class="text-[22px] leading-[28px]">Activate Windows</p>
      <p class="text-[16px] leading-6">Go to Settings to activate Windows.</p>
    </div>

    <!-- Mouse pointer -->
    <svg class="pointer-events-none absolute top-[389px] left-[580px] h-4 w-[11px]" viewBox="0 0 11 16" fill="#fff" stroke="#aaa"><path d="M1 1v12l3-2.5L6 15l2-1-2-4h4z"/></svg>

    <script>
      const tabs = [
        ['bin', 'S'], ['tri', 'v'], ['yt', 'Y'], ['yt', 'I'], ['medium', 'S'], ['yt', 'M'],
        ['yt', 'x'], ['google', 'p'], ['google', 'C'], ['reddit', 'I'], ['tbadge', '['], ['steam', 'L'],
        ['yt', '('], ['yt', ')'], ['yt', '('], ['yt', '('], ['yt', '('], ['gpt', '('],
        ['bluebook', 'S'], ['google', 'e'], ['whatsapp', ')'], ['yt', '('], ['rainbow', 'E'], ['rbadge', ',']
      ];
      document.getElementById('tabs').innerHTML = tabs.map(([icon, label]) => `
        <div class="flex h-4 min-w-0 flex-1 items-center border-r border-[#3c3e3d] pl-[2px]">
          <svg class="size-[13px] shrink-0"><use href="#${icon}"/></svg>
          <span class="ml-[5px] w-1 overflow-hidden text-[10px] text-[#bbb]">${label}</span>
        </div>`).join('');
    </script>
  </body>
</html>
